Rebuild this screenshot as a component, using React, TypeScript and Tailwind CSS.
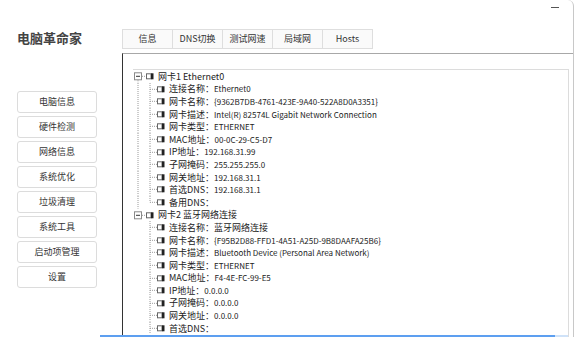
const font = { fontFamily: '"Noto Sans CJK SC", "Noto Sans", sans-serif' }

const menu = ['电脑信息', '硬件检测', '网络信息', '系统优化', '垃圾清理', '系统工具', '启动项管理', '设置']
const tabs = ['信息', 'DNS切换', '测试网速', '局域网', 'Hosts']

type Card = { title: string; items: string[]; more?: boolean }

const cards: Card[] = [
  {
    title: '网卡1 Ethernet0',
    items: [
      '连接名称：Ethernet0',
      '网卡名称：{9362B7DB-4761-423E-9A40-522A8D0A3351}',
      '网卡描述：Intel(R) 82574L Gigabit Network Connection',
      '网卡类型：ETHERNET',
      'MAC地址：00-0C-29-C5-D7',
      'IP地址：192.168.31.99',
      '子网掩码：255.255.255.0',
      '网关地址：192.168.31.1',
      '首选DNS：192.168.31.1',
      '备用DNS：',
    ],
  },
  {
    title: '网卡2 蓝牙网络连接',
    more: true,
    items: [
      '连接名称：蓝牙网络连接',
      '网卡名称：{F95B2D88-FFD1-4A51-A25D-9B8DAAFA25B6}',
      '网卡描述：Bluetooth Device (Personal Area Network)',
      '网卡类型：ETHERNET',
      'MAC地址：F4-4E-FC-99-E5',
      'IP地址：0.0.0.0',
      '子网掩码：0.0.0.0',
      '网关地址：0.0.0.0',
      '首选DNS：',
    ],
  },
]

const H = 12.6

function PlugIcon({ x }: { x: number }) {
  const c = H / 2
  return (
    <g>
      <rect x={x + 0.5} y={c - 2.5} width={4.5} height={5} fill="none" stroke="#666" strokeWidth={1} />
      <rect x={x + 5} y={c - 3} width={2.5} height={6} fill="#222" />
    </g>
  )
}

function Label({ text }: { text: string }) {
  const i = text.indexOf('：')
  const value = text.slice(i + 1)
  // latin values are drawn a touch smaller so they keep the narrow width of the original
  const latin = /^[\x20-\x7e]*$/.test(value)
  if (i < 0 || !latin) {
    return <span className="whitespace-nowrap text-[9px] leading-none text-[#222]">{text}</span>
  }
  return (
    <span className="whitespace-nowrap text-[9px] leading-none text-[#222]">
      {text.slice(0, i + 1)}
      <span className="text-[8px]">{value}</span>
    </span>
  )
}

function RootRow({ text, hasNext }: { text: string; hasNext: boolean }) {
  const c = H / 2
  return (
    <div className="flex h-[12.6px] shrink-0 items-center">
      <svg width="25" height={H} className="shrink-0">
        <rect x={1.5} y={c - 3.5} width={7} height={7} fill="#fff" stroke="#8a8a8a" strokeWidth={1} />
        <line x1={3} y1={c} x2={7} y2={c} stroke="#333" strokeWidth={1} />
        <line x1={9} y1={c} x2={13} y2={c} stroke="#9a9a9a" strokeDasharray="1 1" />
        {hasNext && <line x1={5} y1={c + 4} x2={5} y2={H} stroke="#9a9a9a" strokeDasharray="1 1" />}
        <PlugIcon x={13} />
      </svg>
      <span className="whitespace-nowrap text-[9px] leading-none text-[#222]">{text}</span>
    </div>
  )
}

function ChildRow({ text, parentHasNext, last }: { text: string; parentHasNext: boolean; last: boolean }) {
  const c = H / 2
  return (
    <div className="flex h-[12.6px] shrink-0 items-center">
      <svg width="36" height={H} className="shrink-0">
        {parentHasNext && <line x1={5} y1={0} x2={5} y2={H} stroke="#9a9a9a" strokeDasharray="1 1" />}
        <line x1={17} y1={0} x2={17} y2={last ? c : H} stroke="#9a9a9a" strokeDasharray="1 1" />
        <line x1={17} y1={c} x2={24} y2={c} stroke="#9a9a9a" strokeDasharray="1 1" />
        <PlugIcon x={24} />
      </svg>
      <Label text={text} />
    </div>
  )
}

export default function App() {
  return (
    <div
      className="relative flex h-[337px] w-[574px] overflow-hidden rounded-tr-[6px] border-r border-[#c8c8c8] bg-white"
      style={font}
    >
      <aside className="flex w-[122px] shrink-0 flex-col pl-[17px]">
        <h1 className="mt-[31px] text-[13px] font-bold leading-[14px] text-[#444]">电脑革命家</h1>
        <nav className="mt-[46px] flex w-[80px] flex-col gap-[3px]">
          {menu.map((m) => (
            <button
              key={m}
              className="flex h-[22px] items-center justify-center rounded-[3px] border border-[#dcdcdc] bg-white text-[9px] text-[#333]"
            >
              {m}
            </button>
          ))}
        </nav>
      </aside>

      <main className="flex min-h-0 flex-1 flex-col">
        <div className="flex h-[29px] shrink-0 justify-end pr-[14px] pt-[7px]">
          <span className="h-[1px] w-[8px] bg-[#555]" />
        </div>
        <div className="flex h-[20px] shrink-0">
          {tabs.map((t) => (
            <div
              key={t}
              className="-ml-px flex w-[51px] items-center justify-center border border-[#dedede] bg-[#fafafa] text-[9px] text-[#333] first:ml-0"
            >
              {t}
            </div>
          ))}
        </div>
        <section className="mt-[4px] flex min-h-0 flex-1 flex-col border-l border-t border-l-[#333] border-t-[#a8a8a8] pl-[10px] pr-[4px] pt-[15px]">
          <div className="flex min-h-0 flex-1 flex-col overflow-hidden border-r border-t border-[#dcdcdc]">
            {cards.map((card, i) => {
              const hasNext = i < cards.length - 1
              return (
                <div key={card.title} className="flex shrink-0 flex-col">
                  <RootRow text={card.title} hasNext={hasNext} />
                  {card.items.map((it, j) => (
                    <ChildRow
                      key={it}
                      text={it}
                      parentHasNext={hasNext}
                      last={!card.more && j === card.items.length - 1}
                    />
                  ))}
                </div>
              )
            })}
          </div>
        </section>
      </main>

      <div className="absolute bottom-0 left-[100px] h-[2px] w-[455px] bg-[#5d9ff0]" />
      <div className="absolute bottom-0 left-[555px] h-[2px] w-[13px] bg-[#cfe2f8]" />
    </div>
  )
}
